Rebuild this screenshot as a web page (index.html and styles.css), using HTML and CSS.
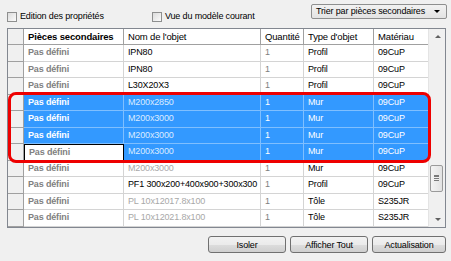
FILE: index.html
```html
<!DOCTYPE html>
<html lang="fr">
<head>
    <meta charset="UTF-8">
    <title>Pièces secondaires</title>
    <link rel="stylesheet" href="styles.css">
</head>
<body>
    <div class="window">
        <!-- barre d'options -->
        <div class="toolbar">
            <label class="check first"><span class="box"></span>Edition des propriétés</label>
            <label class="check"><span class="box"></span>Vue du modèle courant</label>
            <div class="combo">Trier par pièces secondaires<span class="arrow"></span></div>
        </div>

        <!-- grille -->
        <div class="grid">
            <div class="rows">
                <div class="row head">
                    <div class="rh"></div>
                    <div class="c bold">Pièces secondaires</div>
                    <div class="c">Nom de l'objet</div>
                    <div class="c">Quantité</div>
                    <div class="c">Type d'objet</div>
                    <div class="c">Matériau</div>
                </div>
                <div class="row">
                    <div class="rh"></div>
                    <div class="c pd">Pas défini</div>
                    <div class="c">IPN80</div>
                    <div class="c grey">1</div>
                    <div class="c">Profil</div>
                    <div class="c">09CuP</div>
                </div>
                <div class="row">
                    <div class="rh"></div>
                    <div class="c pd">Pas défini</div>
                    <div class="c">IPN80</div>
                    <div class="c grey">1</div>
                    <div class="c">Profil</div>
                    <div class="c">09CuP</div>
                </div>
                <div class="row">
                    <div class="rh"></div>
                    <div class="c pd">Pas défini</div>
                    <div class="c">L30X20X3</div>
                    <div class="c grey">1</div>
                    <div class="c">Profil</div>
                    <div class="c">09CuP</div>
                </div>
                <div class="row sel">
                    <div class="rh"></div>
                    <div class="c pd">Pas défini</div>
                    <div class="c lite">M200x2850</div>
                    <div class="c grey">1</div>
                    <div class="c">Mur</div>
                    <div class="c">09CuP</div>
                </div>
                <div class="row sel">
                    <div class="rh"></div>
                    <div class="c pd">Pas défini</div>
                    <div class="c lite">M200x3000</div>
                    <div class="c grey">1</div>
                    <div class="c">Mur</div>
                    <div class="c">09CuP</div>
                </div>
                <div class="row sel">
                    <div class="rh"></div>
                    <div class="c pd">Pas défini</div>
                    <div class="c lite">M200x3000</div>
                    <div class="c grey">1</div>
                    <div class="c">Mur</div>
                    <div class="c">09CuP</div>
                </div>
                <div class="row sel">
                    <div class="rh"></div>
                    <div class="c pd focus">Pas défini</div>
                    <div class="c lite">M200x3000</div>
                    <div class="c grey">1</div>
                    <div class="c">Mur</div>
                    <div class="c">09CuP</div>
                </div>
                <div class="row">
                    <div class="rh"></div>
                    <div class="c pd">Pas défini</div>
                    <div class="c lite">M200x3000</div>
                    <div class="c grey">1</div>
                    <div class="c">Mur</div>
                    <div class="c">09CuP</div>
                </div>
                <div class="row">
                    <div class="rh"></div>
                    <div class="c pd">Pas défini</div>
                    <div class="c">PF1 300x200+400x900+300x300</div>
                    <div class="c grey">1</div>
                    <div class="c">Profil</div>
                    <div class="c">09CuP</div>
                </div>
                <div class="row">
                    <div class="rh"></div>
                    <div class="c pd">Pas défini</div>
                    <div class="c lite">PL 10x12017.8x100</div>
                    <div class="c grey">1</div>
                    <div class="c">Tôle</div>
                    <div class="c">S235JR</div>
                </div>
                <div class="row">
                    <div class="rh"></div>
                    <div class="c pd">Pas défini</div>
                    <div class="c lite">PL 10x12021.8x100</div>
                    <div class="c grey">1</div>
                    <div class="c">Tôle</div>
                    <div class="c">S235JR</div>
                </div>
            </div>

            <div class="scrollbar">
                <span class="sb-up"></span>
                <span class="thumb"><span class="grip"></span></span>
                <span class="sb-down"></span>
            </div>

            <!-- cadre rouge sur la sélection -->
            <div class="highlight"></div>
        </div>

        <!-- boutons -->
        <div class="buttons">
            <button>Isoler</button>
            <button>Afficher Tout</button>
            <button class="last">Actualisation</button>
        </div>
    </div>
</body>
</html>
```

FILE: styles.css
```css
* {
    margin: 0;
    padding: 0;
    box-sizing: border-box;
}

body {
    font-family: "Liberation Sans", Arial, sans-serif;
    font-size: 9px;
    letter-spacing: -0.15px;
    color: #000;
    background-color: #f0f0f0;
}

.window {
    width: 451px;
    height: 261px;
    overflow: hidden;
}

/* barre d'options */
.toolbar {
    display: flex;
    align-items: flex-start;
    height: 28px;
    padding-left: 7px;
}

.check {
    display: flex;
    align-items: center;
    margin-top: 11px;
    height: 11px;
    line-height: 11px;
}

.check.first {
    width: 145px;
}

.box {
    width: 10px;
    height: 10px;
    margin-right: 3px;
    border: 1px solid #8e8f8f;
    background: linear-gradient(135deg, #dcdcdc, #fbfbfb);
}

.combo {
    position: relative;
    margin: 4px 4px 0 auto;
    width: 136px;
    height: 15px;
    line-height: 13px;
    padding-left: 4px;
    border: 1px solid #8e8f8f;
    border-radius: 2px;
    background: linear-gradient(#f2f2f2, #e3e3e3);
}

.arrow {
    position: absolute;
    right: 6px;
    top: 5px;
    border-left: 3px solid transparent;
    border-right: 3px solid transparent;
    border-top: 3px solid #000;
}

/* grille */
.grid {
    position: relative;
    display: flex;
    margin: 0 5px 0 7px;
    height: 200px;
    border: 1px solid #828790;
    background-color: #fff;
}

.rows {
    width: 421px;
    height: 198px;
    overflow: hidden;
}

.row {
    display: grid;
    grid-template-columns: 16px 100px 137px 43px 70px 55px;
    height: 16.5px;
}

.row.head {
    height: 16px;
}

.rh {
    background-color: #f0f0f0;
    border-right: 1px solid #a0a0a0;
    border-bottom: 1px solid #a0a0a0;
}

.c {
    padding-left: 4px;
    line-height: 15px;
    white-space: nowrap;
    overflow: hidden;
    border-right: 1px solid #d4d4d4;
    border-bottom: 1px solid #d4d4d4;
}

.head .c {
    border-color: #a0a0a0;
    font-size: 9.5px;
}

.bold {
    font-weight: bold;
}

.pd {
    font-weight: bold;
    color: #808080;
}

.grey {
    color: #808080;
}

.lite {
    color: #a8a8a8;
}

.sel .c {
    background-color: #3399ff;
    color: #fff;
    border-color: #7fbfff;
}

.sel .c.lite {
    color: #dcebff;
}

.sel .c.focus {
    background-color: #fff;
    color: #808080;
    border: 1px solid #000;
}

/* barre de défilement */
.scrollbar {
    position: relative;
    width: 17px;
    background-color: #f0f0f0;
    border-left: 1px solid #e4e4e4;
}

.sb-up,
.sb-down {
    position: absolute;
    left: 6px;
    border-left: 3px solid transparent;
    border-right: 3px solid transparent;
}

.sb-up {
    top: 6px;
    border-bottom: 3px solid #606060;
}

.sb-down {
    bottom: 6px;
    border-top: 3px solid #606060;
}

.thumb {
    position: absolute;
    left: 1px;
    top: 136px;
    width: 13px;
    height: 27px;
    border: 1px solid #9a9a9a;
    border-radius: 2px;
    background: linear-gradient(90deg, #f4f4f4, #e2e2e2);
}

.grip {
    position: absolute;
    left: 3px;
    top: 9px;
    width: 5px;
    height: 6px;
    border-top: 1px solid #7a7a7a;
    border-bottom: 1px solid #7a7a7a;
    background: linear-gradient(#f0f0f0 1px, #7a7a7a 1px, #7a7a7a 2px, #f0f0f0 2px);
    background-size: 100% 2px;
    background-repeat: repeat-y;
    background-position: 0 1px;
}

/* cadre rouge */
.highlight {
    position: absolute;
    left: 0;
    top: 63px;
    width: 423px;
    height: 71px;
    border: 3px solid #ee0000;
    border-radius: 8px;
}

/* boutons */
.buttons {
    display: flex;
    justify-content: flex-end;
    gap: 4px;
    margin-top: 8px;
    padding-right: 5px;
}

button {
    width: 78px;
    height: 17px;
    font-family: "Liberation Sans", Arial, sans-serif;
    font-size: 9px;
    letter-spacing: -0.15px;
    color: #000;
    border: 1px solid #707070;
    border-radius: 3px;
    background: linear-gradient(#f2f2f2 0%, #ebebeb 50%, #dddddd 51%, #cfcfcf 100%);
}

button.last {
    width: 74px;
}
```
